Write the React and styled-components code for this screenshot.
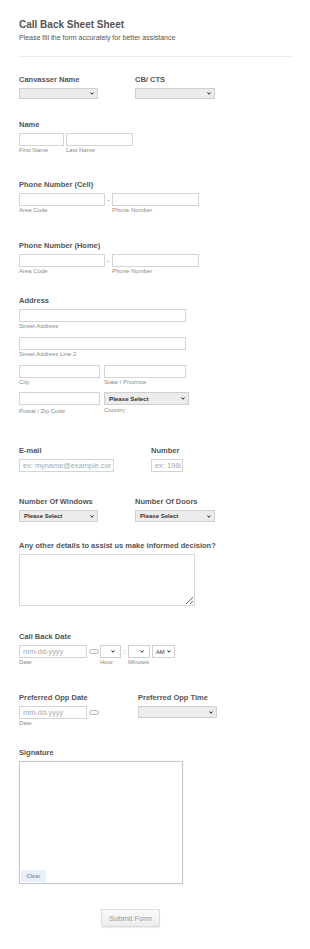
import React from "react"
import styled, { createGlobalStyle } from "styled-components"

const GlobalStyle = createGlobalStyle`
    html, body {
        margin: 0;
        padding: 0;
        background: #fff;
    }
    body {
        font-family: "Liberation Sans", Arial, Helvetica, sans-serif;
        color: #555;
    }
    * { box-sizing: border-box; }
`

const Page = styled.form`
    width: 310px;
    padding: 19px 19px 20px 19px;
    display: flex;
    flex-direction: column;
`

const Title = styled.h1`
    margin: 0 0 2px 0;
    font-size: 10px;
    line-height: 12px;
    font-weight: bold;
    color: #555;
`

const Subtitle = styled.p`
    margin: 0;
    font-size: 7px;
    line-height: 9px;
    color: #555;
`

const Divider = styled.hr`
    margin: 14px 0 0 0;
    border: 0;
    height: 1px;
    background: #ececec;
`

const Section = styled.section`
    margin-top: ${p => p.$top}px;
`

const Columns = styled.div`
    display: grid;
    grid-template-columns: ${p => p.$first}px auto;
`

const Label = styled.label`
    display: block;
    margin-bottom: 4px;
    font-size: 7.5px;
    line-height: 9px;
    font-weight: bold;
    color: #555;
    white-space: nowrap;
`

const Row = styled.div`
    display: flex;
    align-items: flex-start;
    gap: ${p => p.$gap || 0}px;
    margin-top: ${p => p.$top || 0}px;
`

const Field = styled.div`
    display: flex;
    flex-direction: column;
`

const TextInput = styled.input`
    width: ${p => p.$w}px;
    height: 13px;
    margin: 0;
    padding: 0 ${p => (p.$tight ? 1 : 2)}px 0 3px;
    border: 1px solid #d4d4d4;
    border-radius: 0;
    background: #fff;
    font-family: "Liberation Sans", Arial, sans-serif;
    font-size: 7.4px;
    color: #555;
    outline: none;

    &::placeholder {
        color: #a8a8a8;
    }
`

const SubLabel = styled.span`
    margin-top: ${p => p.$mt || 1}px;
    font-size: 6px;
    line-height: 7px;
    color: #8a8a8a;
    white-space: nowrap;
`

const Sep = styled.span`
    width: ${p => p.$w}px;
    height: 13px;
    display: flex;
    align-items: center;
    justify-content: center;
    font-size: 7px;
    color: #888;
`

const SelectBox = styled.div`
    width: ${p => p.$w}px;
    height: ${p => p.$h || 12}px;
    display: flex;
    align-items: center;
    justify-content: space-between;
    padding: 0 ${p => p.$pr || 3}px 0 ${p => p.$pl || 4}px;
    border: 1px solid #cfcfcf;
    background: ${p => (p.$white ? "#fff" : "#ececec")};
    font-size: ${p => p.$fs || 6}px;
    font-weight: ${p => (p.$light ? "normal" : "bold")};
    color: #333;
    white-space: nowrap;
`

const Chevron = () => (
    <svg width="4" height="3" viewBox="0 0 8 6">
        <polyline points="1,1 4,4.5 7,1" fill="none" stroke="#222" strokeWidth="2" />
    </svg>
)

const Select = ({ children, ...props }) => (
    <SelectBox {...props}>
        <span>{children}</span>
        <Chevron />
    </SelectBox>
)

const DateIcon = styled.span`
    width: 13px;
    height: 13px;
    display: flex;
    align-items: center;
    justify-content: center;

    &::after {
        content: "";
        width: 8px;
        height: 3px;
        border: 1px solid #b8b8b8;
        border-radius: 3px;
        background: #f6f6f6;
    }
`

const TextArea = styled.textarea`
    display: block;
    width: 176px;
    height: 52px;
    margin: 0;
    border: 1px solid #d8d8d8;
    border-radius: 0;
    outline: none;
    resize: both;
`

const SignatureBox = styled.div`
    width: 164px;
    height: 123px;
    display: flex;
    align-items: flex-end;
    padding: 1px;
    border: 1px solid #c8c8c8;
    box-shadow: 0 0 1px #d8d8d8;
    background: #fff;
`

const ClearButton = styled.span`
    width: 25px;
    height: 12px;
    display: flex;
    align-items: center;
    justify-content: center;
    background: #e6effc;
    border-radius: 2px 2px 0 0;
    font-size: 5.5px;
    font-weight: bold;
    color: #8899aa;
`

const SubmitButton = styled.button`
    width: 59px;
    height: 18px;
    margin: 25px 0 0 82px;
    padding: 0;
    border: 1px solid #dcdcdc;
    border-radius: 1px;
    background: linear-gradient(#fafafa, #ececec);
    box-shadow: 0 1px 1px rgba(0, 0, 0, 0.08);
    font-family: "Liberation Sans", Arial, sans-serif;
    font-size: 7.5px;
    color: #999;
`

function TimeSelects() {
    return (
        <>
            <Field>
                <Select $w={21} $h={13} $white $pr={5}></Select>
                <SubLabel>Hour</SubLabel>
            </Field>
            <Sep $w={7}>:</Sep>
            <Field>
                <Select $w={22} $h={13} $white $pr={5}></Select>
                <SubLabel>Minutes</SubLabel>
            </Field>
            <Field style={{ marginLeft: 2 }}>
                <Select $w={23} $h={13} $white $pr={3} $pl={3} $fs={5.8} $light>AM</Select>
            </Field>
        </>
    )
}

function PhoneField({ label, top }) {
    return (
        <Section $top={top}>
            <Label>{label}</Label>
            <Row>
                <Field>
                    <TextInput $w={86} />
                    <SubLabel>Area Code</SubLabel>
                </Field>
                <Sep $w={7}>-</Sep>
                <Field>
                    <TextInput $w={87} />
                    <SubLabel>Phone Number</SubLabel>
                </Field>
            </Row>
        </Section>
    )
}

export default function App() {
    return (
        <>
            <GlobalStyle />
            <Page onSubmit={e => e.preventDefault()}>
                <Title>Call Back Sheet Sheet</Title>
                <Subtitle>Please fill the form accurately for better assistance</Subtitle>
                <Divider />

                <Section $top={18}>
                    <Columns $first={116}>
                        <Field>
                            <Label>Canvasser Name</Label>
                            <Select $w={79} $h={11}></Select>
                        </Field>
                        <Field>
                            <Label>CB/ CTS</Label>
                            <Select $w={80} $h={11}></Select>
                        </Field>
                    </Columns>
                </Section>

                <Section $top={21}>
                    <Label>Name</Label>
                    <Row $gap={2}>
                        <Field>
                            <TextInput $w={45} />
                            <SubLabel>First Name</SubLabel>
                        </Field>
                        <Field>
                            <TextInput $w={67} />
                            <SubLabel>Last Name</SubLabel>
                        </Field>
                    </Row>
                </Section>

                <PhoneField label="Phone Number (Cell)" top={26} />
                <PhoneField label="Phone Number (Home)" top={27} />

                <Section $top={21}>
                    <Label>Address</Label>
                    <Field>
                        <TextInput $w={167} />
                        <SubLabel>Street Address</SubLabel>
                    </Field>
                    <Row $top={7}>
                        <Field>
                            <TextInput $w={167} />
                            <SubLabel>Street Address Line 2</SubLabel>
                        </Field>
                    </Row>
                    <Row $top={7} $gap={4}>
                        <Field>
                            <TextInput $w={81} />
                            <SubLabel>City</SubLabel>
                        </Field>
                        <Field>
                            <TextInput $w={82} />
                            <SubLabel>State / Province</SubLabel>
                        </Field>
                    </Row>
                    <Row $top={6} $gap={4}>
                        <Field>
                            <TextInput $w={81} />
                            <SubLabel $mt={3}>Postal / Zip Code</SubLabel>
                        </Field>
                        <Field>
                            <Select $w={85} $h={13} $fs={6.2}>Please Select</Select>
                            <SubLabel $mt={2}>Country</SubLabel>
                        </Field>
                    </Row>
                </Section>

                <Section $top={31}>
                    <Columns $first={132}>
                        <Field>
                            <Label>E-mail</Label>
                            <TextInput $w={95} placeholder="ex: myname@example.com" />
                        </Field>
                        <Field>
                            <Label>Number</Label>
                            <TextInput $w={32} $tight placeholder="ex: 1980" />
                        </Field>
                    </Columns>
                </Section>

                <Section $top={25}>
                    <Columns $first={116}>
                        <Field>
                            <Label>Number Of Windows</Label>
                            <Select $w={79}>Please Select</Select>
                        </Field>
                        <Field>
                            <Label>Number Of Doors</Label>
                            <Select $w={80}>Please Select</Select>
                        </Field>
                    </Columns>
                </Section>

                <Section $top={19}>
                    <Label>Any other details to assist us make informed decision?</Label>
                    <TextArea />
                </Section>

                <Section $top={26}>
                    <Label>Call Back Date</Label>
                    <Row>
                        <Field>
                            <TextInput $w={68} placeholder="mm-dd-yyyy" />
                            <SubLabel>Date</SubLabel>
                        </Field>
                        <DateIcon />
                        <TimeSelects />
                    </Row>
                </Section>

                <Section $top={27}>
                    <Columns $first={119}>
                        <Field>
                            <Label>Preferred Opp Date</Label>
                            <Row>
                                <Field>
                                    <TextInput $w={68} placeholder="mm-dd-yyyy" />
                                    <SubLabel>Date</SubLabel>
                                </Field>
                                <DateIcon />
                            </Row>
                        </Field>
                        <Field>
                            <Label>Preferred Opp Time</Label>
                            <Select $w={79}></Select>
                        </Field>
                    </Columns>
                </Section>

                <Section $top={21}>
                    <Label>Signature</Label>
                    <SignatureBox>
                        <ClearButton>Clear</ClearButton>
                    </SignatureBox>
                </Section>

                <SubmitButton type="submit">Submit Form</SubmitButton>
            </Page>
        </>
    )
}
